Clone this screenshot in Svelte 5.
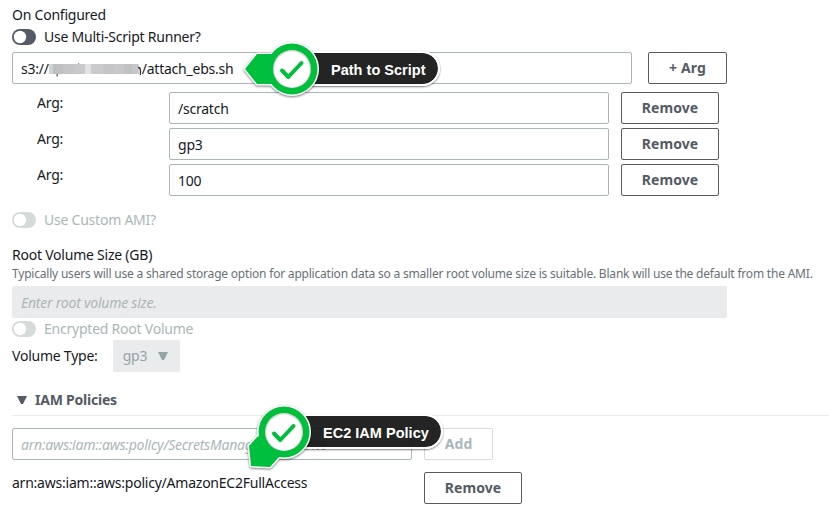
<script>
  const args = ['/scratch', 'gp3', '100'];
  const mosaic = [
    [0, 4, '#d2d2d4'], [4, 10, '#bfbfc1'], [14, 11, '#c5c5c7'], [25, 11, '#c9c9cb'], [36, 6, '#e2e2e4'],
    [42, 12, '#cbcbcd'], [54, 11, '#c5c5c7'], [65, 10, '#c8c8ca'], [75, 8, '#c1c1c3'], [83, 6.5, '#c7c7c9']
  ];
</script>

{#snippet toggle(label, off)}
  <div class="toggle" class:off>
    <svg width="24" height="16" viewBox="0 0 24 16">
      <rect width="24" height="16" rx="8" fill="currentColor" />
      <circle cx="8" cy="8" r="6.2" fill="#fff" />
    </svg>
    <span>{label}</span>
  </div>
{/snippet}

{#snippet badge(down)}
  <svg class="pin" width="82" height="76" viewBox="0 0 82 76">
    <g class="shadow" stroke="#fff" stroke-width="3" stroke-linejoin="round" fill="#fff">
      {#if down}
        <path d="M22 40L13 50L15 70L34 71L44 60Z" />
      {:else}
        <path d="M1 36L13 21H31V51H13Z" />
      {/if}
      <circle cx="48" cy="36" r="25.5" />
    </g>
    <g fill="#00bf3c">
      {#if down}
        <path d="M22 40L13 50L15 70L34 71L44 60Z" />
      {:else}
        <path d="M1 36L13 21H31V51H13Z" />
      {/if}
      <circle cx="48" cy="36" r="25.5" />
    </g>
    <circle cx="48" cy="36" r="19" fill="#d5dcd7" />
    <circle cx="48" cy="36.5" r="17.9" fill="#fff" />
    <path d="M38 37.5L44.3 44L57.5 30" fill="none" stroke="#00bf3c" stroke-width="4" stroke-linecap="round" stroke-linejoin="round" />
  </svg>
{/snippet}

<main>
  <div class="line">On Configured</div>
  {@render toggle('Use Multi-Script Runner?', false)}
  <div class="row script">
    <div class="field path">
      <span>s3://</span>
      <svg class="mosaic" width="93" height="18" viewBox="0 0 93 18">
        {#each mosaic as [x, width, color]}
          <rect {x} y="4" width={width + 0.2} height="10" fill={color} />
        {/each}
        <rect x="7.5" y="14" width="1.4" height="2.5" fill="#666" />
        <rect x="29" y="3" width="1.3" height="1" fill="#999" />
        <path d="M89 7.5q2.4 0 2.4 2.8v4.7" fill="none" stroke="#333" stroke-width="1.3" />
      </svg>
      <span>/attach_ebs.sh</span>
    </div>
    <button class="plus">+ Arg</button>
    <div class="callout first">
      <div class="label"><span>Path to Script</span></div>
      {@render badge(false)}
    </div>
  </div>
  <div class="args">
    {#each args as value}
      <div class="row">
        <span class="name">Arg:</span>
        <div class="field value">{value}</div>
        <button>Remove</button>
      </div>
    {/each}
  </div>
  <div class="ami">{@render toggle('Use Custom AMI?', true)}</div>
  <div class="line">Root Volume Size (GB)</div>
  <div class="hint">Typically users will use a shared storage option for application data so a smaller root volume size is suitable. Blank will use the default from the AMI.</div>
  <div class="field size">Enter root volume size.</div>
  {@render toggle('Encrypted Root Volume', true)}
  <div class="row volume">
    <span>Volume Type:</span>
    <div class="select">
      <span>gp3</span>
      <svg width="10" height="8" viewBox="0 0 10 8"><path d="M0 0H10L6 8H4Z" fill="currentColor" /></svg>
    </div>
  </div>
  <div class="heading">
    <svg width="10" height="8" viewBox="0 0 10 8"><path d="M0 0H10L6 8H4Z" fill="currentColor" /></svg>
    <span>IAM Policies</span>
  </div>
  <div class="row policy">
    <div class="field arn">arn:aws:iam::aws:policy/SecretsManagerReadWrite</div>
    <button class="disabled">Add</button>
    <div class="callout second">
      <div class="label"><span>EC2 IAM Policy</span></div>
      {@render badge(true)}
    </div>
  </div>
  <div class="row attached">
    <span>arn:aws:iam::aws:policy/AmazonEC2FullAccess</span>
    <button>Remove</button>
  </div>
</main>

<style>
  :global(body) { background: #fff; overflow: hidden; }
  main {
    box-sizing: border-box;
    width: 829px;
    height: 514px;
    padding: 4px 0 0 12px;
    font: 14px/22px "Noto Sans", sans-serif;
    letter-spacing: -0.23px;
    color: #16191f;
    white-space: nowrap;
    overflow: hidden;
  }
  svg { display: block; flex: none; }
  .line { height: 22px; }
  .toggle { display: flex; align-items: center; gap: 8px; height: 22px; color: #16191f; }
  .toggle svg { color: #545b64; }
  .toggle.off { color: #aab7b8; }
  .toggle.off svg { color: #d5dbdb; }
  .row { display: flex; align-items: flex-start; position: relative; }
  .field {
    box-sizing: border-box;
    height: 32px;
    padding: 5px 8px 3px;
    border: 1px solid #aab7b8;
    border-radius: 2px;
    background: #fff;
    overflow: hidden;
  }
  button {
    box-sizing: border-box;
    width: 98px;
    height: 32px;
    padding: 0;
    border: 1px solid #545b64;
    border-radius: 2px;
    background: #fff;
    color: #545b64;
    font: bold 14px/20px "Noto Sans", sans-serif;
    letter-spacing: 0.1px;
  }
  .script { margin-top: 4px; gap: 16px; }
  .path { display: flex; width: 620px; }
  .mosaic { margin-top: 2px; }
  .plus { width: 79px; }
  .args { display: flex; flex-direction: column; gap: 4px; padding: 8px 0 0 25px; }
  .name { width: 132px; }
  .value { width: 440px; margin-right: 12px; }
  .ami { padding: 13px 0; }
  .hint { height: 20px; margin-top: -2px; margin-bottom: 2px; font-size: 12px; line-height: 19px; letter-spacing: -0.205px; color: #687078; }
  .size { width: 715px; background: #eaebed; border-color: #eaebed; color: #aab7b8; font-style: italic; }
  .volume { align-items: center; gap: 15px; }
  .select {
    display: flex;
    align-items: center;
    gap: 11px;
    box-sizing: border-box;
    width: 67px;
    height: 32px;
    padding-left: 10px;
    border-radius: 2px;
    background: #eaebed;
    color: #95a5a6;
  }
  .heading {
    display: flex;
    align-items: center;
    gap: 8px;
    height: 30px;
    margin-top: 13px;
    padding-left: 5px;
    border-bottom: 1px solid #eaeded;
    color: #545b64;
    font-weight: bold;
  }
  .policy { margin-top: 12px; gap: 12px; }
  .arn { width: 400px; color: #aab7b8; font-style: italic; }
  .disabled { width: 69px; border-color: #d5dbdb; color: #aab7b8; }
  .attached { margin-top: 12px; }
  .attached span { width: 412px; }
  .callout { position: absolute; z-index: 1; width: 200px; height: 76px; }
  .first { left: 232px; top: -19px; }
  .second { left: 224px; top: -32px; }
  .pin { position: absolute; left: 0; top: 0; overflow: visible; }
  .shadow { filter: drop-shadow(0 1px 1px rgba(0, 0, 0, 0.5)); }
  .label {
    position: absolute;
    left: 48px;
    top: 18px;
    width: 146px;
    height: 31px;
    border: 2px solid #fff;
    border-left: 0;
    border-radius: 0 18px 18px 0;
    background: rgba(19, 19, 19, 0.93);
    background-clip: padding-box;
    box-shadow: 0 1px 2px rgba(0, 0, 0, 0.5);
    color: #fff;
    font: bold 14.5px/34px "Liberation Sans", sans-serif;
    letter-spacing: 0.02px;
  }
  .label span { padding-left: 39px; }
  .second .label { width: 157px; }
</style>
